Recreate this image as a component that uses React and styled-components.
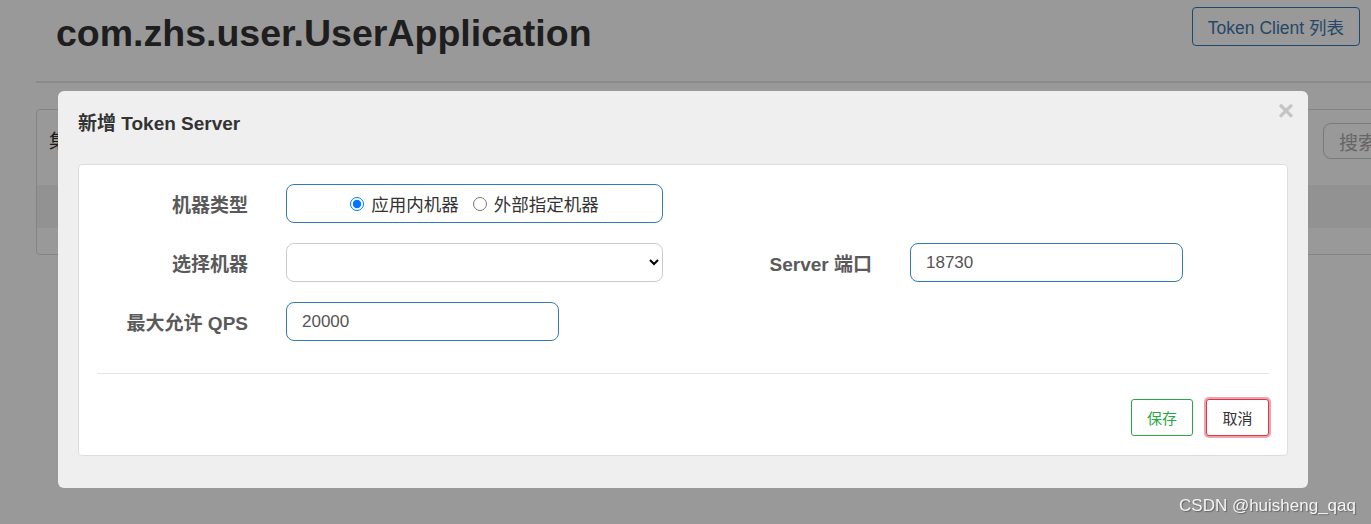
import React from 'react'
import styled, { createGlobalStyle } from 'styled-components'

const GlobalStyle = createGlobalStyle`
  body {
    margin: 0;
    overflow: hidden;
    background: #fff;
    font-family: "Liberation Sans", "Noto Sans CJK SC", sans-serif;
  }
`

const Page = styled.div`
  position: relative;
  width: 1371px;
  height: 524px;
  overflow: hidden;
  padding-left: 36px;
  box-sizing: border-box;
`

const Header = styled.div`
  display: flex;
  justify-content: space-between;
  align-items: flex-start;
  height: 81px;
  padding: 0 11px 0 20px;
  border-bottom: 2px solid #e6e6e6;
`

const Title = styled.h1`
  margin: 0;
  padding-top: 11px;
  font-size: 37.5px;
  line-height: 44px;
  font-weight: bold;
  color: #333;
`

const OutlineBtn = styled.button`
  margin-top: 7px;
  height: 39px;
  padding: 0 15px;
  border: 1px solid #337ab7;
  border-radius: 4px;
  background: transparent;
  color: #3f78ad;
  font-family: "Liberation Sans", "Noto Sans CJK SC", sans-serif;
  font-size: 17.5px;
`

const Card = styled.div`
  margin-top: 26px;
  width: 1400px;
  height: 144px;
  border: 1px solid #ddd;
  border-radius: 4px;
  display: flex;
  flex-direction: column;
`

const CardHead = styled.div`
  height: 75px;
  display: flex;
  align-items: flex-start;
  justify-content: space-between;
  padding: 0 44px 0 12px;
`

const CardTitle = styled.span`
  margin-top: 16px;
  font-size: 19px;
  color: #333;
`

const SearchBtn = styled.button`
  margin-top: 13px;
  height: 36px;
  width: 70px;
  border: 1px solid #ccc;
  border-radius: 8px;
  background: #fff;
  color: #aaa;
  font-size: 19px;
  font-family: "Noto Sans CJK SC", sans-serif;
`

const TableHead = styled.div`
  height: 43px;
  background: #f4f4f4;
`

const Backdrop = styled.div`
  position: fixed;
  inset: 0;
  background: rgba(0, 0, 0, 0.4);
`

const Modal = styled.div`
  position: fixed;
  left: 58px;
  top: 91px;
  width: 1250px;
  box-sizing: border-box;
  padding: 0 20px 32px;
  background: #efefef;
  border-radius: 6px;
`

const ModalHeader = styled.div`
  height: 73px;
  padding-top: 20px;
  box-sizing: border-box;
`

const ModalTitle = styled.h4`
  margin: 0;
  font-size: 19px;
  line-height: 26px;
  font-weight: bold;
  color: #333;
`

const Close = styled.button`
  position: absolute;
  top: 6px;
  right: 14px;
  border: none;
  background: none;
  padding: 0;
  font-size: 28px;
  line-height: 1;
  font-weight: bold;
  color: #c4c4c4;
  font-family: "Liberation Sans", sans-serif;
`

const Panel = styled.div`
  background: #fff;
  border: 1px solid #ddd;
  border-radius: 4px;
  padding: 19px 18px 19px;
`

const FormGrid = styled.div`
  display: grid;
  grid-template-columns: 151px 377px 171px 273px;
  grid-auto-rows: 39px;
  column-gap: 38px;
  row-gap: 20px;
  align-items: center;
`

const Label = styled.label`
  justify-self: end;
  font-size: 19px;
  font-weight: bold;
  color: #5a5a5a;
`

const RadioBox = styled.div`
  height: 39px;
  box-sizing: border-box;
  border: 1px solid #337ab7;
  border-radius: 8px;
  display: flex;
  align-items: center;
  justify-content: center;
  gap: 14px;
  font-family: "Noto Sans CJK SC", sans-serif;
  font-size: 17.5px;
  color: #333;
`

const RadioOpt = styled.label`
  display: flex;
  align-items: center;
  gap: 7px;
  input {
    margin: 0;
    width: 14px;
    height: 14px;
  }
`

const Select = styled.select`
  height: 39px;
  width: 100%;
  border: 1px solid #ccc;
  border-radius: 8px;
  background: #fff;
  padding: 0 8px;
  font-size: 16px;
`

const Input = styled.input`
  height: 39px;
  width: 273px;
  box-sizing: border-box;
  border: 1px solid #337ab7;
  border-radius: 8px;
  padding: 0 15px;
  font-family: "Liberation Sans", sans-serif;
  font-size: 17px;
  color: #555;
  outline: none;
`

const Divider = styled.hr`
  margin: 32px 0 0;
  border: none;
  border-top: 1px solid #e5e5e5;
`

const Footer = styled.div`
  margin-top: 25px;
  display: flex;
  justify-content: flex-end;
  gap: 13px;
`

const ActionBtn = styled.button`
  height: 37px;
  width: ${p => p.$w}px;
  border-radius: 3px;
  background: #fff;
  border: 1px solid ${p => p.$color};
  color: ${p => p.$text};
  font-family: "Noto Sans CJK SC", sans-serif;
  font-size: 15px;
  box-shadow: ${p => (p.$focus ? '0 0 0 2px rgba(220, 53, 69, 0.45)' : 'none')};
`

const Watermark = styled.div`
  position: fixed;
  right: 15px;
  bottom: 8px;
  font-family: "Liberation Sans", sans-serif;
  font-size: 17px;
  color: #f4f4f4;
  text-shadow: 1px 1px 1px rgba(0, 0, 0, 0.35);
`

export default function App() {
  return (
    <>
      <GlobalStyle />
      <Page>
        <Header>
          <Title>com.zhs.user.UserApplication</Title>
          <OutlineBtn>Token Client 列表</OutlineBtn>
        </Header>
        <Card>
          <CardHead>
            <CardTitle>集群列表</CardTitle>
            <SearchBtn>搜索</SearchBtn>
          </CardHead>
          <TableHead />
        </Card>
        <Backdrop />
        <Modal>
          <ModalHeader>
            <ModalTitle>新增 Token Server</ModalTitle>
          </ModalHeader>
          <Close>×</Close>
          <Panel>
            <FormGrid>
              <Label>机器类型</Label>
              <RadioBox>
                <RadioOpt>
                  <input type="radio" name="mt" defaultChecked />
                  应用内机器
                </RadioOpt>
                <RadioOpt>
                  <input type="radio" name="mt" />
                  外部指定机器
                </RadioOpt>
              </RadioBox>
              <span />
              <span />

              <Label>选择机器</Label>
              <Select defaultValue="">
                <option value=""></option>
              </Select>
              <Label>Server 端口</Label>
              <Input defaultValue="18730" />

              <Label>最大允许 QPS</Label>
              <Input defaultValue="20000" />
            </FormGrid>
            <Divider />
            <Footer>
              <ActionBtn $w={62} $color="#28a745" $text="#28a745">保存</ActionBtn>
              <ActionBtn $w={63} $color="#dc3545" $text="#333" $focus>取消</ActionBtn>
            </Footer>
          </Panel>
        </Modal>
        <Watermark>CSDN @huisheng_qaq</Watermark>
      </Page>
    </>
  )
}
